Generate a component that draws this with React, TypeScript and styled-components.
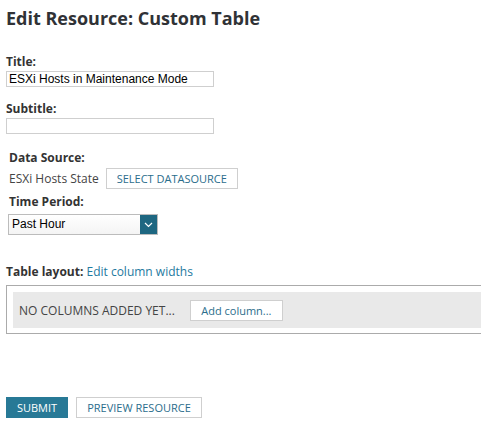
import React from "react";
import styled, { createGlobalStyle } from "styled-components";

const GlobalStyle = createGlobalStyle`
  html, body {
    margin: 0;
    padding: 0;
    background: #ffffff;
    overflow: hidden;
  }
  body {
    font-family: "Open Sans", "Liberation Sans", sans-serif;
    color: #333;
  }
`;

const Page = styled.div`
  padding: 6px 0 0 6px;
`;

const Heading = styled.h1`
  margin: 0;
  font-size: 18px;
  line-height: 24px;
  font-weight: 700;
  color: #303236;
`;

const Field = styled.div<{ $top: number; $indent?: number }>`
  margin-top: ${(p) => p.$top}px;
  padding-left: ${(p) => p.$indent ?? 0}px;
`;

const Label = styled.div`
  font-size: 12px;
  line-height: 14px;
  font-weight: 700;
  color: #333;
`;

const TextInput = styled.input`
  display: block;
  box-sizing: border-box;
  margin-top: 2px;
  width: 208px;
  height: 16px;
  padding: 0 2px;
  border: 1px solid #cfcfcf;
  font-family: "Liberation Sans", Arial, sans-serif;
  font-size: 12px;
  color: #000;
  outline: none;
`;

const SourceRow = styled.div`
  display: flex;
  align-items: center;
  gap: 7px;
  margin-top: 3px;
  font-size: 12px;
  color: #444;
`;

const OutlineButton = styled.button<{ $w: number }>`
  box-sizing: border-box;
  width: ${(p) => p.$w}px;
  height: 21px;
  padding: 0;
  background: #fff;
  border: 1px solid #cfcfcf;
  font-family: "Open Sans", "Liberation Sans", sans-serif;
  font-size: 11px;
  color: #2b6d8c;
  cursor: pointer;
`;

const Select = styled.div`
  box-sizing: border-box;
  display: flex;
  margin-top: 5px;
  margin-left: -1px;
  width: 150px;
  height: 21px;
  border: 1px solid #bcbcbc;
  background: linear-gradient(#ffffff, #f4f4f4);
`;

const SelectValue = styled.div`
  flex: 1;
  padding-left: 3px;
  font-family: "Liberation Sans", Arial, sans-serif;
  font-size: 12px;
  line-height: 19px;
  color: #000;
`;

const SelectArrow = styled.div`
  width: 17px;
  background: #1e6781;
  display: flex;
  align-items: center;
  justify-content: center;
`;

const LayoutLabel = styled.div`
  margin-top: 30px;
  font-size: 12px;
  line-height: 14px;
  font-weight: 700;
  color: #333;
`;

const Link = styled.a`
  font-weight: 400;
  color: #1f7aa0;
  text-decoration: none;
`;

const ColumnsBox = styled.div`
  box-sizing: border-box;
  margin-top: 6px;
  height: 49px;
  border: 1px solid #ababab;
  border-right: none;
  padding: 6px 0 0 6px;
`;

const ColumnsBar = styled.div`
  display: flex;
  align-items: center;
  gap: 15px;
  height: 36px;
  padding-left: 6px;
  background: #e9e9e9;
  font-size: 12px;
  color: #444;
`;

const Actions = styled.div`
  display: flex;
  gap: 8px;
  margin-top: 63px;
`;

const SubmitButton = styled.button`
  width: 62px;
  height: 21px;
  padding: 0;
  border: none;
  background: #287996;
  color: #fff;
  font-family: "Open Sans", "Liberation Sans", sans-serif;
  font-size: 11px;
  cursor: pointer;
`;

export default function App() {
  return (
    <Page>
      <GlobalStyle />
      <Heading>Edit Resource: Custom Table</Heading>

      <Field $top={25}>
        <Label>Title:</Label>
        <TextInput defaultValue="ESXi Hosts in Maintenance Mode" />
      </Field>

      <Field $top={15}>
        <Label>Subtitle:</Label>
        <TextInput defaultValue="" />
      </Field>

      <Field $top={17} $indent={3}>
        <Label>Data Source:</Label>
        <SourceRow>
          <span>ESXi Hosts State</span>
          <OutlineButton $w={132}>SELECT DATASOURCE</OutlineButton>
        </SourceRow>
      </Field>

      <Field $top={6} $indent={3}>
        <Label>Time Period:</Label>
        <Select>
          <SelectValue>Past Hour</SelectValue>
          <SelectArrow>
            <svg width="9" height="6" viewBox="0 0 9 6">
              <path d="M1 1 L4.5 4.5 L8 1" stroke="#fff" strokeWidth="1.2" fill="none" />
            </svg>
          </SelectArrow>
        </Select>
      </Field>

      <LayoutLabel>
        Table layout: <Link href="#">Edit column widths</Link>
      </LayoutLabel>

      <ColumnsBox>
        <ColumnsBar>
          <span>NO COLUMNS ADDED YET...</span>
          <OutlineButton $w={93}>Add column...</OutlineButton>
        </ColumnsBar>
      </ColumnsBox>

      <Actions>
        <SubmitButton>SUBMIT</SubmitButton>
        <OutlineButton $w={126}>PREVIEW RESOURCE</OutlineButton>
      </Actions>
    </Page>
  );
}
